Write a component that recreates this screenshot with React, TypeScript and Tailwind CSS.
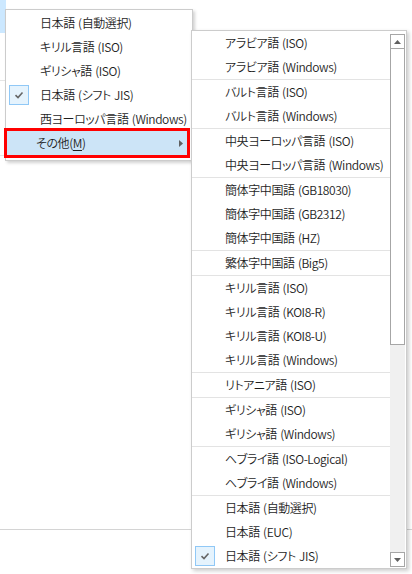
import React from 'react';

const font =
  "font-['Noto_Sans_CJK_JP','Noto_Sans',sans-serif] [font-feature-settings:'palt'] font-[350] tracking-[-0.4px] [word-spacing:1px] text-[12px] text-[#1e1e1e]";

const firstMenu = [
  { label: '日本語 (自動選択)' },
  { label: 'キリル言語 (ISO)' },
  { label: 'ギリシャ語 (ISO)' },
  { label: '日本語 (シフト JIS)', checked: true },
  { label: '西ヨーロッパ言語 (Windows)' },
];

const groups: { label: string; checked?: boolean }[][] = [
  [{ label: 'アラビア語 (ISO)' }, { label: 'アラビア語 (Windows)' }],
  [{ label: 'バルト言語 (ISO)' }, { label: 'バルト言語 (Windows)' }],
  [{ label: '中央ヨーロッパ言語 (ISO)' }, { label: '中央ヨーロッパ言語 (Windows)' }],
  [{ label: '簡体字中国語 (GB18030)' }, { label: '簡体字中国語 (GB2312)' }, { label: '簡体字中国語 (HZ)' }],
  [{ label: '繁体字中国語 (Big5)' }],
  [
    { label: 'キリル言語 (ISO)' },
    { label: 'キリル言語 (KOI8-R)' },
    { label: 'キリル言語 (KOI8-U)' },
    { label: 'キリル言語 (Windows)' },
  ],
  [{ label: 'リトアニア語 (ISO)' }],
  [{ label: 'ギリシャ語 (ISO)' }, { label: 'ギリシャ語 (Windows)' }],
  [{ label: 'ヘブライ語 (ISO-Logical)' }, { label: 'ヘブライ語 (Windows)' }],
  [{ label: '日本語 (自動選択)' }, { label: '日本語 (EUC)' }, { label: '日本語 (シフト JIS)', checked: true }],
];

function CheckBox() {
  return (
    <div className="flex h-[20px] w-[20px] items-center justify-center border border-[#90c8f6] bg-[#e5f3fd]">
      <svg width="10" height="8" viewBox="0 0 10 8">
        <path d="M1.5 4.2 L4 6.5 L8.5 1.5" fill="none" stroke="#666" strokeWidth="1.6" />
      </svg>
    </div>
  );
}

function MenuItem({ label, checked, pad }: { label: string; checked?: boolean; pad: string }) {
  return (
    <div className="flex h-[24px] items-center">
      <div className="ml-[3px] w-[20px]">{checked ? <CheckBox /> : null}</div>
      <span className={`${pad} whitespace-nowrap leading-none`}>{label}</span>
    </div>
  );
}

function Triangle({ up }: { up?: boolean }) {
  return (
    <svg width="7" height="4" viewBox="0 0 7 4">
      <path d={up ? 'M0 4 L3.5 0 L7 4 Z' : 'M0 0 L7 0 L3.5 4 Z'} fill="#606060" />
    </svg>
  );
}

export default function App() {
  return (
    <div className={`relative h-[574px] w-[412px] overflow-hidden bg-white ${font}`}>
      {/* page behind the menus */}
      <div className="flex flex-col">
        <div className="h-[33px] w-[6px] bg-[#cce8ff]" />
        <div className="h-[47px]" />
        <div className="h-px w-[6px] bg-[#e5e5e5]" />
        <div className="h-[74px]" />
        <div className="h-px w-[6px] bg-[#e5e5e5]" />
        <div className="h-[373px]" />
        <div className="h-px bg-[#d4d4d4]" />
      </div>

      {/* first menu */}
      <div className="absolute left-[5px] top-[9px] w-[188px] border border-[#cccccc] bg-white pb-[5px] pt-[1px] shadow-[2px_2px_3px_rgba(0,0,0,0.18)]">
        {firstMenu.map((item) => (
          <MenuItem key={item.label} label={item.label} checked={item.checked} pad="pl-[11px]" />
        ))}
        <div className="ml-[1px] mr-[5px] flex h-[24px] items-center bg-[#cce4f7] outline outline-[3px] outline-[#ff0000]">
          <span className="pl-[29px] leading-none">
            その他(<span className="underline underline-offset-2">M</span>)
          </span>
          <div className="ml-auto mr-[4px] flex items-center">
            <svg width="4" height="7" viewBox="0 0 4 7">
              <path d="M0 0 L4 3.5 L0 7 Z" fill="#606060" />
            </svg>
          </div>
        </div>
      </div>

      {/* second menu */}
      <div className="absolute left-[191px] top-[30px] flex w-[216px] border border-[#cccccc] bg-white shadow-[2px_2px_4px_rgba(0,0,0,0.2)]">
        <div className="w-[198px]">
          {groups.map((group, gi) => (
            <div key={gi} className={gi > 0 ? 'border-t border-[#e3e3e3]' : ''}>
              {group.map((item) => (
                <MenuItem key={item.label} label={item.label} checked={item.checked} pad="pl-[10px]" />
              ))}
            </div>
          ))}
        </div>
        <div className="mr-[1px] flex w-[15px] flex-col pb-[1px] pt-[3px]">
          <div className="flex h-[15px] items-center justify-center border border-[#a6a6a6] bg-white">
            <Triangle up />
          </div>
          <div className="h-[296px] border border-t-0 border-[#a6a6a6] bg-white" />
          <div className="flex-1 bg-[#f0f0f0]" />
          <div className="flex h-[15px] items-center justify-center border border-[#a6a6a6] bg-white">
            <Triangle />
          </div>
        </div>
      </div>
    </div>
  );
}
